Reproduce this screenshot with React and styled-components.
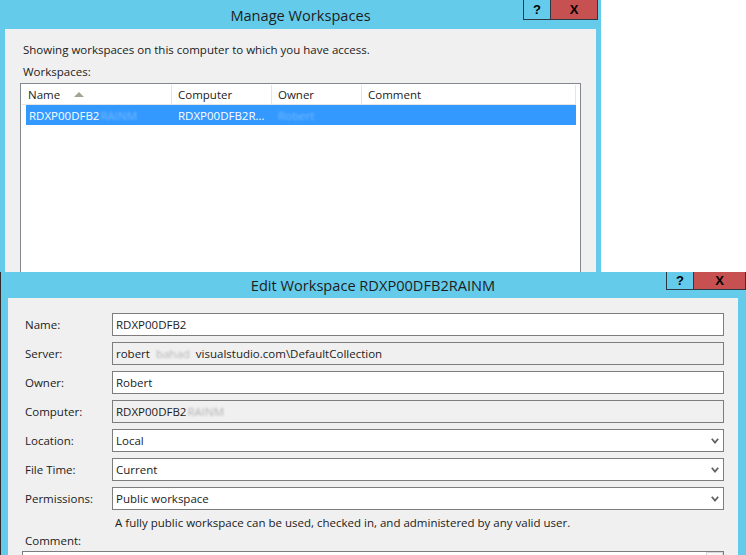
import styled, { createGlobalStyle } from "styled-components";

const GlobalStyle = createGlobalStyle`
  html, body {
    margin: 0;
    padding: 0;
    background: #fff;
  }
  body {
    font-family: "Open Sans", "Noto Sans", sans-serif;
    font-size: 11.5px;
    color: #1b1b1b;
  }
`;

const Desktop = styled.div`
  position: relative;
  width: 746px;
  height: 555px;
  overflow: hidden;
  background: #fff;
`;

const Window = styled.div`
  position: absolute;
  left: ${(p) => p.$left}px;
  top: ${(p) => p.$top}px;
  width: ${(p) => p.$width}px;
  height: ${(p) => p.$height}px;
  box-sizing: border-box;
  display: flex;
  flex-direction: column;
  background: #65cbea;
  padding: 0 ${(p) => p.$padRight}px 0 ${(p) => p.$padLeft}px;
  border-left: ${(p) => (p.$edge ? "1px solid #2c2c2c" : "none")};
`;

const TitleBar = styled.div`
  position: relative;
  height: ${(p) => p.$height}px;
  flex: none;
  display: flex;
  align-items: center;
  justify-content: center;
  font-size: 14.6px;
  color: #1e1e1e;
`;

const CaptionButtons = styled.div`
  position: absolute;
  top: 0;
  right: ${(p) => p.$right}px;
  display: flex;
`;

const CaptionButton = styled.div`
  width: ${(p) => p.$width}px;
  height: ${(p) => p.$height}px;
  box-sizing: border-box;
  border: 1px solid #2b3944;
  border-top: none;
  border-left: ${(p) => (p.$close ? "none" : "1px solid #2b3944")};
  background: ${(p) => (p.$close ? "#c75050" : "#65cbea")};
  display: flex;
  align-items: center;
  justify-content: center;
  font-family: "Liberation Sans", Arial, sans-serif;
  font-weight: 700;
  font-size: 13px;
  color: #000;
`;

const Content = styled.div`
  flex: 1;
  background: #f0f0f0;
  padding: ${(p) => p.$pad};
  display: flex;
  flex-direction: column;
`;

const Intro = styled.div`
  margin-left: 3px;
  line-height: 16px;
`;

const SectionLabel = styled.div`
  margin: 6px 0 0 3px;
  line-height: 16px;
`;

const ListBox = styled.div`
  margin-top: 3px;
  height: 240px;
  background: #fff;
  border: 1px solid #828790;
  padding: 1px 4px 0 1px;
`;

const HeaderRow = styled.div`
  display: grid;
  grid-template-columns: 150px 100px 90px 1fr;
  height: 19px;
  border-bottom: 1px solid #e5e5e5;
`;

const HeaderCell = styled.div`
  display: flex;
  align-items: center;
  gap: 14px;
  padding-left: 6px;
  border-right: 1px solid #e5e5e5;
`;

const SortArrow = styled.span`
  width: 0;
  height: 0;
  border-left: 5px solid transparent;
  border-right: 5px solid transparent;
  border-bottom: 5px solid #a4a493;
`;

const ItemRow = styled.div`
  display: grid;
  grid-template-columns: 146px 100px 90px 1fr;
  height: 20px;
  margin-left: 4px;
  background: ${(p) => (p.$selected ? "#3399ff" : "transparent")};
  color: ${(p) => (p.$selected ? "#fff" : "#1b1b1b")};
`;

const ItemCell = styled.div`
  display: flex;
  align-items: center;
  padding-left: 6px;
  white-space: nowrap;
  &:first-child {
    padding-left: 3px;
  }
`;

const Blur = styled.span`
  display: inline-block;
  padding: 0 ${(p) => p.$pad}px;
  filter: blur(1.3px);
  opacity: 0.3;
  white-space: nowrap;
`;

const Form = styled.div`
  display: grid;
  grid-template-columns: 87px 1fr;
  row-gap: 6px;
  align-items: center;
`;

const Label = styled.div`
  line-height: 16px;
`;

const Field = styled.div`
  height: 23px;
  box-sizing: border-box;
  border: 1px solid #7d7d7d;
  background: ${(p) => (p.$readOnly ? "#f0f0f0" : "#fff")};
  display: flex;
  align-items: center;
  justify-content: space-between;
  padding: 0 4px 0 3px;
  white-space: nowrap;
`;

const Chevron = () => (
  <svg width="8" height="6" viewBox="0 0 8 6">
    <polyline
      points="0.8,0.8 4,4.6 7.2,0.8"
      fill="none"
      stroke="#5f5f5f"
      strokeWidth="1.7"
    />
  </svg>
);

const Hint = styled.div`
  grid-column: 2;
  padding-left: 3px;
  line-height: 14px;
`;

const CommentLabel = styled.div`
  margin-top: 3px;
  line-height: 16px;
`;

const CommentBox = styled.div`
  margin: 2px 0 0 -3px;
  height: 60px;
  box-sizing: border-box;
  border: 1px solid #7d7d7d;
  background: #fff;
  display: flex;
  justify-content: flex-end;
`;

const ScrollTrack = styled.div`
  width: 17px;
  box-sizing: border-box;
  border: 1px solid #d9d9d9;
  background: #f7f7f7;
`;

const fields = [
  { label: "Name:", value: "RDXP00DFB2" },
  {
    label: "Server:",
    value: (
      <span>
        robert<Blur $pad={6}>bahad</Blur>visualstudio.com\DefaultCollection
      </span>
    ),
    readOnly: true,
  },
  { label: "Owner:", value: "Robert" },
  {
    label: "Computer:",
    value: (
      <span>
        RDXP00DFB2<Blur $pad={1}>RAINM</Blur>
      </span>
    ),
    readOnly: true,
  },
  { label: "Location:", value: "Local", select: true },
  { label: "File Time:", value: "Current", select: true },
  { label: "Permissions:", value: "Public workspace", select: true },
];

export default function App() {
  return (
    <Desktop>
      <GlobalStyle />
      <Window $left={0} $top={0} $width={601} $height={320} $padLeft={5} $padRight={5}>
        <TitleBar $height={29}>
          Manage Workspaces
          <CaptionButtons $right={-2}>
            <CaptionButton $width={28} $height={20}>?</CaptionButton>
            <CaptionButton $width={47} $height={20} $close>
              X
            </CaptionButton>
          </CaptionButtons>
        </TitleBar>
        <Content $pad="13px 15px 0 15px">
          <Intro>Showing workspaces on this computer to which you have access.</Intro>
          <SectionLabel>Workspaces:</SectionLabel>
          <ListBox>
            <HeaderRow>
              <HeaderCell>
                Name <SortArrow />
              </HeaderCell>
              <HeaderCell>Computer</HeaderCell>
              <HeaderCell>Owner</HeaderCell>
              <HeaderCell>Comment</HeaderCell>
            </HeaderRow>
            <ItemRow $selected>
              <ItemCell>
                RDXP00DFB2<Blur $pad={1}>RAINM</Blur>
              </ItemCell>
              <ItemCell>RDXP00DFB2R...</ItemCell>
              <ItemCell>
                <Blur $pad={0}>Robert</Blur>
              </ItemCell>
              <ItemCell />
            </ItemRow>
          </ListBox>
        </Content>
      </Window>

      <Window $left={0} $top={272} $width={746} $height={300} $padLeft={7} $padRight={8} $edge>
        <TitleBar $height={26}>
          Edit Workspace RDXP00DFB2RAINM
          <CaptionButtons $right={-8}>
            <CaptionButton $width={28} $height={18}>?</CaptionButton>
            <CaptionButton $width={52} $height={18} $close>
              X
            </CaptionButton>
          </CaptionButtons>
        </TitleBar>
        <Content $pad="15px 14px 0 17px">
          <Form>
            {fields.map((f) => (
              <>
                <Label key={f.label}>{f.label}</Label>
                <Field key={f.label + "-v"} $readOnly={f.readOnly}>
                  {f.value}
                  {f.select && <Chevron />}
                </Field>
              </>
            ))}
            <Hint>
              A fully public workspace can be used, checked in, and administered by any
              valid user.
            </Hint>
          </Form>
          <CommentLabel>Comment:</CommentLabel>
          <CommentBox>
            <ScrollTrack />
          </CommentBox>
        </Content>
      </Window>
    </Desktop>
  );
}
